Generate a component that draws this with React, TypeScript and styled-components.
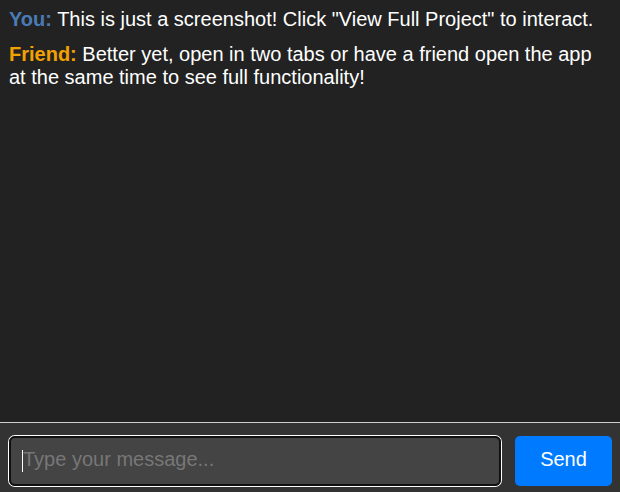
import styled, { createGlobalStyle } from "styled-components";

const GlobalStyle = createGlobalStyle`
    html, body {
        margin: 0;
        padding: 0;
        background-color: #222222;
        font-family: "Liberation Sans", Arial, sans-serif;
    }
`

type MessageType = {
    from: "you" | "friend"
    text: string
}

const messages: MessageType[] = [
    {from: "you", text: 'This is just a screenshot! Click "View Full Project" to interact.'},
    {from: "friend", text: "Better yet, open in two tabs or have a friend open the app at the same time to see full functionality!"},
]

export default function App() {
    return (
        <>
            <GlobalStyle/>
            <Chat>
                <MessageList>
                    {messages.map((m, i) => (
                        <Message key={i}>
                            <Sender from={m.from}>{m.from === "you" ? "You:" : "Friend:"}</Sender> {m.text}
                        </Message>
                    ))}
                </MessageList>
                <Footer>
                    <InputWrap>
                        <Caret/>
                        <Input placeholder="Type your message..."/>
                    </InputWrap>
                    <SendBtn>Send</SendBtn>
                </Footer>
            </Chat>
        </>
    );
}

const Chat = styled.div`
    display: flex;
    flex-direction: column;
    height: 492px;
    width: 620px;
    background-color: #222222;
`

const MessageList = styled.div`
    flex: 1;
    padding: 8px 8px 0 9px;
    display: flex;
    flex-direction: column;
    gap: 12px;
`

const Message = styled.div`
    color: #ffffff;
    font-size: 20px;
    line-height: 23px;
`

const Sender = styled.span<{ from: "you" | "friend" }>`
    font-weight: 700;
    color: ${p => p.from === "you" ? "#4a7bb7" : "#f3a100"};
`

const Footer = styled.div`
    border-top: 1px solid #cfcfcf;
    background-color: #333333;
    height: 70px;
    flex-shrink: 0;
    box-sizing: border-box;
    padding: 13px 8px 6px 9px;
    display: flex;
    gap: 14px;
`

const InputWrap = styled.div`
    position: relative;
    flex: 1;
    height: 50px;
    border-radius: 6px;
    box-shadow: 0 0 0 1px #ffffff;
    display: flex;
`

const Input = styled.input`
    flex: 1;
    box-sizing: border-box;
    height: 100%;
    border: 2px solid #101010;
    border-radius: 6px;
    background-color: #444444;
    color: #ffffff;
    font-family: "Liberation Sans", Arial, sans-serif;
    font-size: 20px;
    padding: 0 12px 3px;
    outline: none;

    &::placeholder {
        color: #777777;
    }
`

const Caret = styled.span`
    position: absolute;
    left: 13px;
    top: 14px;
    width: 1px;
    height: 22px;
    background-color: #ffffff;
`

const SendBtn = styled.button`
    width: 97px;
    height: 50px;
    border: none;
    border-radius: 5px;
    padding: 0 0 3px;
    background-color: #007bff;
    color: #ffffff;
    font-family: "Liberation Sans", Arial, sans-serif;
    font-size: 20px;
    cursor: pointer;
`
